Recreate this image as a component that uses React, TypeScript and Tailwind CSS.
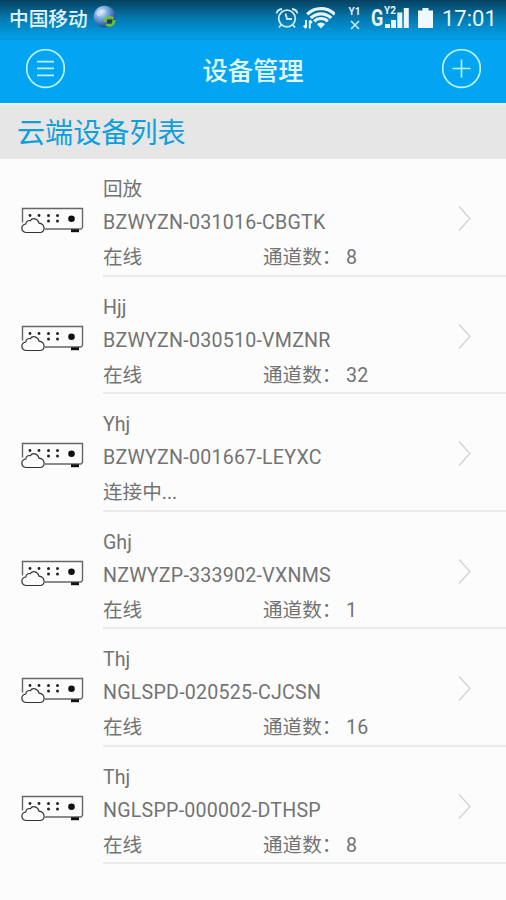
const latin = "font-[Roboto,'Noto_Sans_CJK_SC',sans-serif]";

type Device = {
  name: string;
  uid: string;
  status: string;
  channels?: number;
};

const devices: Device[] = [
  { name: "回放", uid: "BZWYZN-031016-CBGTK", status: "在线", channels: 8 },
  { name: "Hjj", uid: "BZWYZN-030510-VMZNR", status: "在线", channels: 32 },
  { name: "Yhj", uid: "BZWYZN-001667-LEYXC", status: "连接中..." },
  { name: "Ghj", uid: "NZWYZP-333902-VXNMS", status: "在线", channels: 1 },
  { name: "Thj", uid: "NGLSPD-020525-CJCSN", status: "在线", channels: 16 },
  { name: "Thj", uid: "NGLSPP-000002-DTHSP", status: "在线", channels: 8 },
];

function GlobeIcon() {
  return (
    <svg width="24" height="24" viewBox="0 0 24 24">
      <defs>
        <radialGradient id="globe" cx="0.35" cy="0.3" r="0.75">
          <stop offset="0" stopColor="#d3e6f7" />
          <stop offset="0.45" stopColor="#6ea3dc" />
          <stop offset="1" stopColor="#153f87" />
        </radialGradient>
      </defs>
      <circle cx="11.5" cy="11.5" r="10.8" fill="url(#globe)" />
      <path d="M4 7c3-3 6-3 8-2s-1 3-3 4-2 3-4 2-2-3-1-4z" fill="#d9ebf8" opacity="0.6" />
      <path d="M12 17a5 5 0 0 1 8.500-3.200M21 15a5 5 0 0 1-8 4.300" fill="none" stroke="#70bd32" strokeWidth="2.800" />
      <path d="M14 14.500h5v4h-5z" fill="#17455c" />
    </svg>
  );
}

function AlarmIcon() {
  return (
    <svg width="24" height="22" viewBox="0 0 24 22" fill="none" stroke="#cdeaf6" strokeWidth="1.800">
      <circle cx="12" cy="11.500" r="8.300" />
      <path d="M10.500 6.500l1.500 5.500h5M1.500 6.500q1-4 5.500-4.500M17 2q4.500 .5 5.500 4.500M6 18l-2 2.500M18 18l2 2.500" />
    </svg>
  );
}

function WifiIcon() {
  return (
    <svg width="32" height="24" viewBox="0 0 32 24" fill="none" stroke="#e4f4fb">
      <path d="M4.200 8.400a19.500 19.500 0 0 1 27.600 0" strokeWidth="3.300" />
      <path d="M7.800 12a14.500 14.500 0 0 1 20.400 0" strokeWidth="3.300" />
      <path d="M11.200 15.400a9.600 9.600 0 0 1 13.600 0" strokeWidth="3" />
      <path d="M13.800 18q4.200-3 8.400 0L18 22.500z" fill="#e4f4fb" stroke="none" />
      <path d="M3 14v8M.8 19.500l2.200 2.700M6.800 22.500v-8M9 17l-2.200-2.700" strokeWidth="2" />
    </svg>
  );
}

function SignalIcon() {
  return (
    <svg width="26" height="22" viewBox="0 0 26 22" fill="#eaf7fd">
      <path d="M1 17h5v4H1zM7 13h5v8H7zM13.300 5.500h5V21h-5zM19.800 1h5v20h-5z" />
    </svg>
  );
}

function BatteryIcon() {
  return (
    <svg width="15" height="20" viewBox="0 0 15 20" fill="#f0fafe">
      <path d="M4.500 0h6v2.500H15V20H0V2.500h4.500z" />
    </svg>
  );
}

function RecorderIcon() {
  return (
    <svg width="63" height="27" viewBox="0 0 63 27" className="shrink-0">
      <path d="M1.500 15.500V1.500H61.500V20.500L60 22H24" fill="none" stroke="#666" strokeWidth="1.400" />
      <path d="M50 22.300h8v2.900h-8z" fill="#111" />
      <g fill="#222">
        <circle cx="9" cy="8.500" r="1.400" />
        <circle cx="18" cy="8.500" r="1.400" />
        <circle cx="27.500" cy="8.500" r="1.500" />
        <circle cx="36.500" cy="8.500" r="1.500" />
        <circle cx="27.500" cy="14" r="1.500" />
        <circle cx="36.500" cy="14" r="1.500" />
      </g>
      <circle cx="50.500" cy="11.700" r="3.300" fill="#111" />
      <path
        d="M5 25.500C-.5 24.500-.5 18 4.800 17C5 14 7.500 13 9.300 13.800C11.500 10 17 11.500 18 16.200C24.500 17.200 24.500 24.500 19.500 25.500Z"
        fill="#fcfcfc"
        stroke="#333"
        strokeWidth="1.200"
      />
    </svg>
  );
}

function StatusBar() {
  return (
    <div className="flex h-[38px] items-start bg-linear-to-b from-[#05415f] via-[#037bb3] via-50% to-[#009fe8] text-[#e6f6fd]">
      <span className="ml-[9px] mt-[3px] font-['Noto_Sans_CJK_SC',sans-serif] text-[19.7px] leading-[30px] font-medium">中国移动</span>
      <span className="ml-[5px] mt-[5px]"><GlobeIcon /></span>
      <div className="ml-auto flex items-start">
        <span className="mt-[7px]"><AlarmIcon /></span>
        <span className="ml-[4px] mt-[6px]"><WifiIcon /></span>
        <span className="ml-[12px] mt-[7px] flex w-[15px] flex-col items-center text-[10px] leading-[10px] font-bold">
          <span>Y1</span>
          <svg width="10" height="10" viewBox="0 0 10 10" className="mt-[3px]" stroke="#c7eaf9" strokeWidth="1.600">
            <path d="M1 1l8 8M9 1L1 9" />
          </svg>
        </span>
        <span className="relative ml-[9px] mt-[7px] flex h-[22px] w-[39px] justify-end">
          <span className="absolute left-0 top-0 origin-left scale-x-75 text-[24px] leading-[23px] font-bold">G</span>
          <span className="absolute left-[13px] -top-px text-[10px] leading-[10px] font-bold">Y2</span>
          <SignalIcon />
        </span>
        <span className="ml-[8px] mt-[8px]"><BatteryIcon /></span>
        <span className="ml-[9px] mr-[8px] mt-[4px] w-[56px] whitespace-nowrap text-[22px] leading-[30px]">17:01</span>
      </div>
    </div>
  );
}

function Header() {
  return (
    <header className="flex h-[65px] items-start justify-between border-t-2 border-[#0398da] bg-[#03a5f2] px-[25px] pt-[9px]">
      <button aria-label="菜单">
        <svg width="40" height="40" viewBox="0 0 40 40" fill="none" stroke="#b8f3ff" strokeWidth="1.700">
          <circle cx="20.500" cy="19.500" r="18.800" />
          <path d="M12 12.700h17M12 19.400h17M12 26.300h17" />
        </svg>
      </button>
      <h1 className="mt-[2px] font-['Noto_Sans_CJK_SC',sans-serif] text-[25.3px] leading-[36px] font-medium text-[#e2faff]">设备管理</h1>
      <button aria-label="添加">
        <svg width="40" height="40" viewBox="0 0 40 40" fill="none" stroke="#b8f3ff" strokeWidth="1.700">
          <circle cx="20.500" cy="19.500" r="18.800" />
          <path d="M11.500 19.500h18M20.500 10.500v18" />
        </svg>
      </button>
    </header>
  );
}

function DeviceRow({ device }: { device: Device }) {
  return (
    <li className="flex h-[117.5px] pl-[21px]">
      <div className="mt-[48px] w-[82px] shrink-0">
        <RecorderIcon />
      </div>
      <div className="flex flex-1 border-b-2 border-[#ebebeb]">
        <div className="flex-1 pt-[15px] text-[19.6px] text-[#737373]">
          <p className="h-[32px] leading-[32px]">{device.name}</p>
          <p className="h-[34px] leading-[34px] tracking-[0.24px] whitespace-nowrap">{device.uid}</p>
          <div className="flex h-[36px] leading-[36px]">
            <span className="w-[160px]">{device.status}</span>
            {device.channels !== undefined && (
              <>
                <span className="w-[83px] whitespace-nowrap">通道数：</span>
                <span className="tracking-[0.3px]">{device.channels}</span>
              </>
            )}
          </div>
        </div>
        <svg width="14" height="27" viewBox="0 0 14 27" className="mr-[34px] mt-[46px]" fill="none" stroke="#d2d2d2" strokeWidth="1.300">
          <path d="M1 1.500L12 13.500L1 25.500" />
        </svg>
      </div>
    </li>
  );
}

export default function App() {
  return (
    <div className={`h-[900px] w-[506px] overflow-hidden bg-[#fcfcfc] ${latin}`}>
      <StatusBar />
      <Header />
      <h2 className="h-[56px] border-t-2 border-[#e3f4fa] bg-[#e6e6e6] pl-[17px] font-['Noto_Sans_CJK_SC',sans-serif] text-[28.1px] leading-[51px] text-[#109fdc]">
        云端设备列表
      </h2>
      <ul>
        {devices.map((device) => (
          <DeviceRow key={device.uid} device={device} />
        ))}
      </ul>
    </div>
  );
}
